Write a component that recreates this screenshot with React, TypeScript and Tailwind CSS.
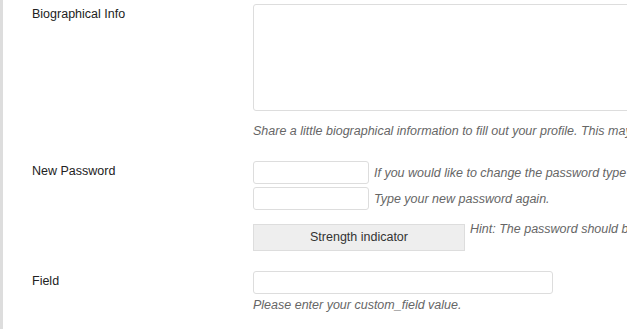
export default function App() {
  return (
    <div className="w-[627px] h-[329px] overflow-hidden flex bg-white font-['Liberation_Sans',Arial,sans-serif] text-[12.5px] text-[#222]">
      <div className="w-[3px] shrink-0 bg-[#dddddd]" />
      <div className="pl-[29px] flex flex-col">
        {/* Biographical info */}
        <div className="flex pt-[4px]">
          <label className="w-[221px] shrink-0 leading-[20px]">Biographical Info</label>
          <div className="flex flex-col">
            <textarea className="w-[400px] h-[107px] border border-[#dddddd] rounded-[3px] bg-white resize-none outline-none" />
            <p className="mt-[10px] leading-[20px] italic text-[#666] whitespace-nowrap">
              Share a little biographical information to fill out your profile. This may be shown publicly.
            </p>
          </div>
        </div>

        {/* Password */}
        <div className="flex mt-[20px]">
          <label className="w-[221px] shrink-0 leading-[20px]">New Password</label>
          <div className="flex flex-col">
            <div className="flex items-center">
              <input type="password" className="w-[116px] h-[23px] border border-[#dddddd] rounded-[3px] outline-none" />
              <span className="ml-[5px] italic text-[#666] whitespace-nowrap leading-[20px]">
                If you would like to change the password type a new one. Otherwise leave this blank.
              </span>
            </div>
            <div className="flex items-center mt-[3px]">
              <input type="password" className="w-[116px] h-[23px] border border-[#dddddd] rounded-[3px] outline-none" />
              <span className="ml-[5px] italic text-[#666] whitespace-nowrap leading-[20px]">
                Type your new password again.
              </span>
            </div>
            <div className="flex items-start mt-[14px]">
              <div className="w-[212px] h-[27px] shrink-0 bg-[#eeeeee] border border-[#dddddd] flex items-center justify-center text-[#333]">
                Strength indicator
              </div>
              <p className="ml-[5px] -mt-[5px] italic text-[#666] whitespace-nowrap leading-[20px]">
                Hint: The password should be at least seven characters long.
              </p>
            </div>
          </div>
        </div>

        {/* Custom field */}
        <div className="flex mt-[20px]">
          <label className="w-[221px] shrink-0 leading-[20px]">Field</label>
          <div className="flex flex-col">
            <input type="text" className="w-[300px] h-[23px] border border-[#dddddd] rounded-[3px] outline-none" />
            <p className="mt-[1px] leading-[20px] italic text-[#666] whitespace-nowrap">
              Please enter your custom_field value.
            </p>
          </div>
        </div>
      </div>
    </div>
  );
}
